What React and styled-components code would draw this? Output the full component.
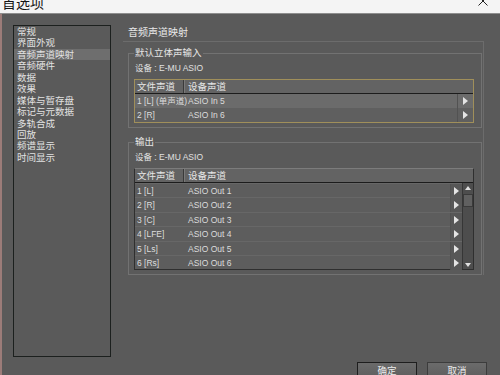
import styled, { createGlobalStyle } from "styled-components";

const GlobalStyle = createGlobalStyle`
  body {
    margin: 0;
    background: #5a5a5a;
  }
`;

const FONT = `"Liberation Sans", "Noto Sans CJK SC", sans-serif`;

const sideItems = [
  "常规", "界面外观", "音频声道映射", "音频硬件", "数据", "效果",
  "媒体与暂存盘", "标记与元数据", "多轨合成", "回放", "频谱显示", "时间显示",
];

const inputRows = [
  ["1 [L] (单声道)", "ASIO In 5"],
  ["2 [R]", "ASIO In 6"],
];

const outputRows = [
  ["1 [L]", "ASIO Out 1"],
  ["2 [R]", "ASIO Out 2"],
  ["3 [C]", "ASIO Out 3"],
  ["4 [LFE]", "ASIO Out 4"],
  ["5 [Ls]", "ASIO Out 5"],
  ["6 [Rs]", "ASIO Out 6"],
];

const Arrow = () => (
  <svg width="5" height="8" viewBox="0 0 5 8">
    <polygon points="0,0 5,4 0,8" fill="#e4e4e4" />
  </svg>
);

const App = () => {
  return (
    <Window>
      <GlobalStyle />
      <TitleBar>
        <TitleText>首选项</TitleText>
        <CloseIcon width="10" height="10" viewBox="0 0 10 10">
          <path d="M0.5 0.5 L9.5 9.5 M9.5 0.5 L0.5 9.5" stroke="#222" strokeWidth="1" />
        </CloseIcon>
      </TitleBar>

      <Body>
        {/* left category list */}
        <Sidebar>
          {sideItems.map((item) => (
            <SideItem key={item} $active={item === "音频声道映射"}>{item}</SideItem>
          ))}
        </Sidebar>

        {/* right settings page */}
        <RightCol>
          <PageTitle>音频声道映射</PageTitle>
          <Frame>
            <Group>
              <Legend>默认立体声输入</Legend>
              <DeviceLine>设备 : E-MU ASIO</DeviceLine>
              <MapTable $gold>
                <HeadRow>
                  <HeadCell $first>文件声道</HeadCell>
                  <HeadCell>设备声道</HeadCell>
                </HeadRow>
                {inputRows.map(([a, b], i) => (
                  <Row key={a} $cols="49px 1fr 16px" $bg={i === 0 ? "#6b6b6b" : "#5f5f5f"}>
                    <Cell $first>{a}</Cell>
                    <Cell>{b}</Cell>
                    <ArrowCell $pad={5}><Arrow /></ArrowCell>
                  </Row>
                ))}
              </MapTable>
            </Group>

            <Group $gap>
              <Legend>输出</Legend>
              <DeviceLine>设备 : E-MU ASIO</DeviceLine>
              <MapTable>
                <HeadRow>
                  <HeadCell $first>文件声道</HeadCell>
                  <HeadCell>设备声道</HeadCell>
                </HeadRow>
                <ListArea>
                  <RowList>
                    {outputRows.map(([a, b]) => (
                      <Row key={a} $cols="49px 1fr 12px" $bg="#5d5d5d" $line>
                        <Cell $first>{a}</Cell>
                        <Cell>{b}</Cell>
                        <ArrowCell $pad={3} $shade><Arrow /></ArrowCell>
                      </Row>
                    ))}
                  </RowList>
                  <ScrollBar>
                    <ScrollBtn>
                      <svg width="6" height="4" viewBox="0 0 6 4"><polygon points="0,4 3,0 6,4" fill="#e0e0e0" /></svg>
                    </ScrollBtn>
                    <Thumb />
                    <ScrollBtn $bottom>
                      <svg width="6" height="4" viewBox="0 0 6 4"><polygon points="0,0 3,4 6,0" fill="#e0e0e0" /></svg>
                    </ScrollBtn>
                  </ScrollBar>
                </ListArea>
              </MapTable>
            </Group>
          </Frame>

          <ButtonRow>
            <Button $primary>确定</Button>
            <Button>取消</Button>
          </ButtonRow>
        </RightCol>
      </Body>
    </Window>
  );
};

export default App;


const Window = styled.div`
  width: 500px;
  height: 375px;
  overflow: hidden;
  display: flex;
  flex-direction: column;
  font-family: ${FONT};
`

const TitleBar = styled.div`
  height: 13px;
  flex-shrink: 0;
  background: #f4f4f4;
  border-bottom: 1px solid #8e8e8e;
  display: flex;
  justify-content: space-between;
  align-items: flex-start;
  overflow: hidden;
`

const TitleText = styled.div`
  font-family: "Noto Sans CJK SC", sans-serif;
  font-size: 14px;
  line-height: 14px;
  color: #151515;
  margin: -5px 0 0 2px;
`

const CloseIcon = styled.svg`
  margin: -4px 12px 0 0;
`

const Body = styled.div`
  flex: 1;
  display: flex;
  gap: 12px;
  padding: 11px 0 0 11px;
  background: #5a5a5a;
  border-left: 2px solid #9c7c79;
`

const Sidebar = styled.div`
  width: 98px;
  height: 332px;
  box-sizing: border-box;
  border: 1px solid #1c201e;
  flex-shrink: 0;
`

const SideItem = styled.div`
  height: 11.45px;
  line-height: 11.45px;
  padding-left: 3px;
  font-size: 9.5px;
  color: #e2e2e2;
  white-space: nowrap;
  background: ${(p) => (p.$active ? "#6e6e6e" : "transparent")};
`

const RightCol = styled.div`
  width: 364px;
  display: flex;
  flex-direction: column;
`

const PageTitle = styled.div`
  height: 16px;
  line-height: 16px;
  padding-left: 5px;
  font-size: 10px;
  color: #e8e8e8;
`

const Frame = styled.div`
  width: 361px;
  box-sizing: border-box;
  border-top: 1px solid #6c6c6c;
  border-right: 1px solid #6c6c6c;
  padding: 5px 1px 0 5px;
`

const Group = styled.fieldset`
  margin: ${(p) => (p.$gap ? "8px" : "0")} 0 0 0;
  padding: 2px 7px 4px 5px;
  min-width: 0;
  border: 1px solid #727272;
  box-sizing: border-box;
  width: 354px;
`

const Legend = styled.legend`
  padding: 0 1px;
  font-size: 9.5px;
  line-height: 12px;
  color: #e6e6e6;
`

const DeviceLine = styled.div`
  height: 12px;
  line-height: 12px;
  padding: 1px 0 0 1px;
  font-size: 8.5px;
  color: #e0e0e0;
`

const MapTable = styled.div`
  margin-top: 5px;
  border: 1px solid ${(p) => (p.$gold ? "#a08f5a" : "#2f2f2f")};
  border-top-color: ${(p) => (p.$gold ? "#a08f5a" : "#7c7c7c")};
  font-size: 8.5px;
  color: #dcdcdc;
`

const HeadRow = styled.div`
  display: grid;
  grid-template-columns: 49px 1fr;
  height: 13px;
  background: #636363;
  border-bottom: 1px solid #1c1c1c;
`

const HeadCell = styled.div`
  font-size: 9.5px;
  line-height: 13px;
  padding-left: ${(p) => (p.$first ? "2px" : "4px")};
  color: #e6e6e6;
  border-right: ${(p) => (p.$first ? "1px solid #3a3a3a" : "none")};
  box-shadow: ${(p) => (p.$first ? "1px 0 0 #7a7a7a" : "none")};
`

const ListArea = styled.div`
  display: flex;
`

const RowList = styled.div`
  flex: 1;
`

const Row = styled.div`
  display: grid;
  grid-template-columns: ${(p) => p.$cols};
  height: ${(p) => (p.$line ? "14.4px" : "14px")};
  box-sizing: border-box;
  background: ${(p) => p.$bg};
  border-top: ${(p) => (p.$line ? "1px solid #676767" : "none")};
`

const Cell = styled.div`
  line-height: 14px;
  padding-left: ${(p) => (p.$first ? "2px" : "4px")};
  white-space: nowrap;
  overflow: visible;
`

const ArrowCell = styled.div`
  display: flex;
  align-items: center;
  padding-left: ${(p) => p.$pad}px;
  background: ${(p) => (p.$shade ? "#575757" : "transparent")};
  border-left: 1px solid #525252;
`

const ScrollBar = styled.div`
  width: 10px;
  display: flex;
  flex-direction: column;
  background: #4d4d4d;
  border-left: 1px solid #363636;
`

const ScrollBtn = styled.div`
  height: 9px;
  display: flex;
  align-items: center;
  justify-content: center;
  margin-top: ${(p) => (p.$bottom ? "auto" : "0")};
`

const Thumb = styled.div`
  margin-top: 2px;
  height: 13px;
  background: #606060;
  border: 1px solid #3a3a3a;
  box-sizing: border-box;
`

const ButtonRow = styled.div`
  margin-top: auto;
  height: 13px;
  display: flex;
  justify-content: flex-end;
  align-items: flex-start;
  gap: 10px;
`

const Button = styled.div`
  width: 60px;
  height: 18px;
  box-sizing: border-box;
  flex-shrink: 0;
  text-align: center;
  font-size: 9.5px;
  line-height: 16px;
  color: #ececec;
  background: linear-gradient(#6b6b6b, #5d5d5d);
  border: 1px solid ${(p) => (p.$primary ? "#1e1e1e" : "#3c3c3c")};
`
